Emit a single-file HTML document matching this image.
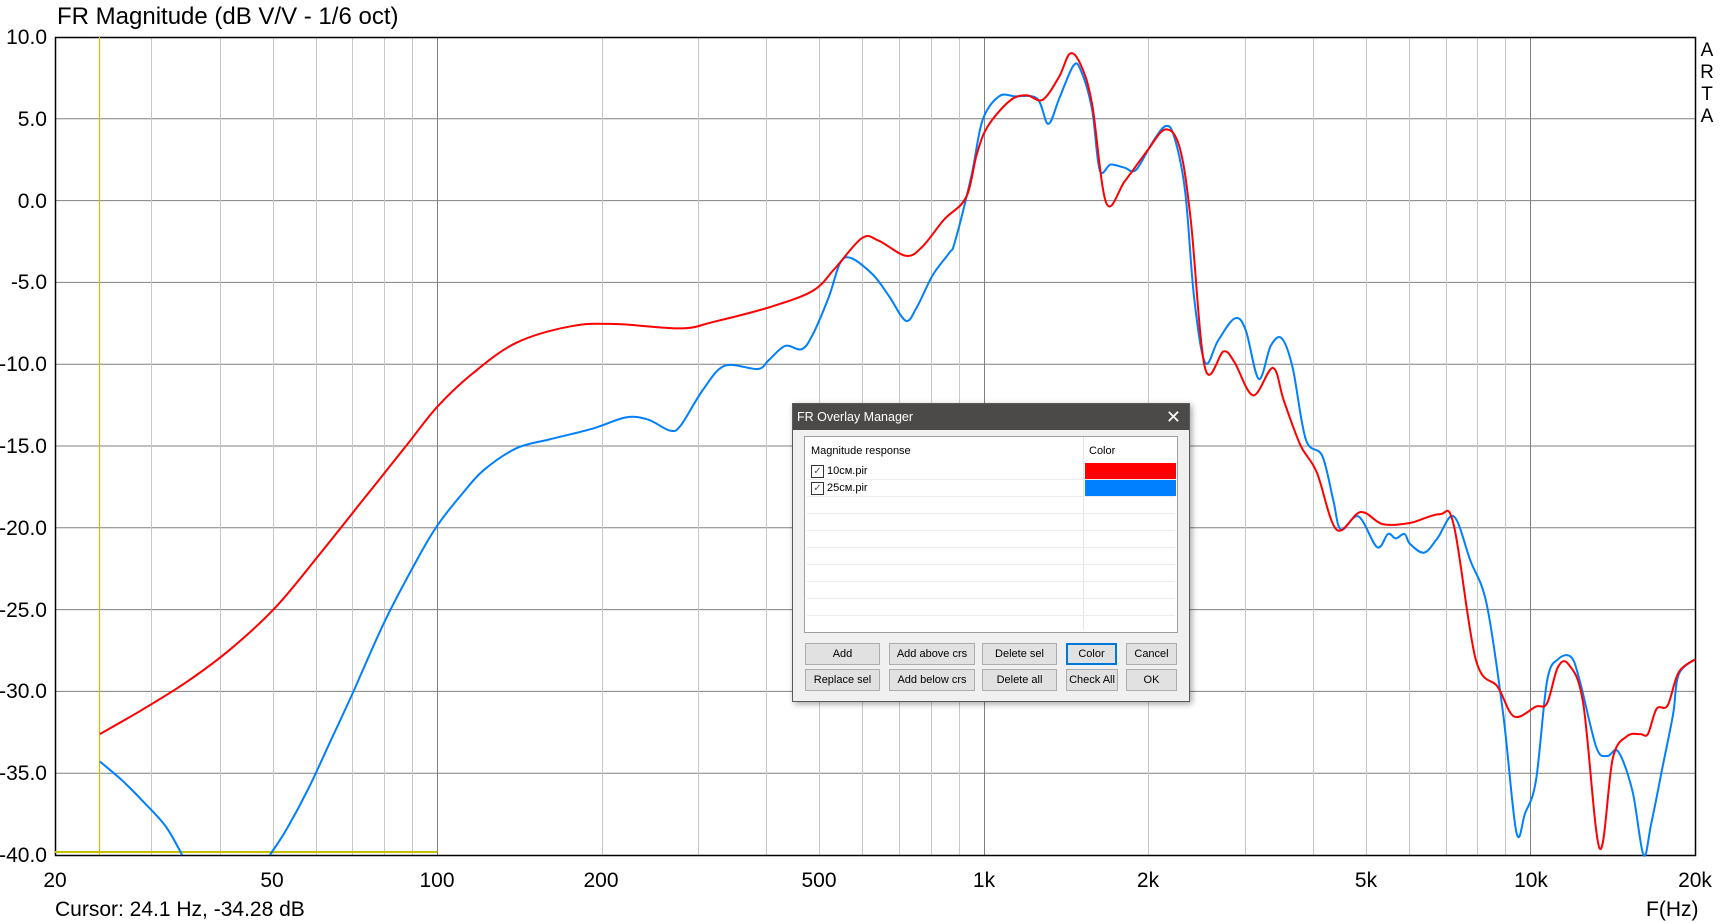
<!DOCTYPE html>
<html><head><meta charset="utf-8">
<style>
body{margin:0;width:1720px;height:923px;background:#fff;overflow:hidden;font-family:"Liberation Sans",Arial,sans-serif;position:relative}
.t{position:absolute;font-size:21px;color:#000;white-space:nowrap;line-height:1}
.yl{position:absolute;right:1673px;font-size:21px;line-height:1}
.xl{position:absolute;top:870px;font-size:21px;line-height:1;transform:translateX(-50%)}
#dlg{position:absolute;left:792px;top:403px;width:396px;height:297px;background:#f0f0f0;border:1px solid #5a5a5a;box-shadow:2px 2px 6px rgba(0,0,0,.35);font-size:11px}
#tb{height:26px;background:#4b4a48;color:#fff;font-size:12.5px;line-height:26px;padding-left:4px;position:relative}
#tb span{position:absolute;right:8px;top:0;font-size:18px}
#lb{position:absolute;left:11px;top:32px;width:372px;height:195px;border:1px solid #a0a0a0;background:#fff}
.row{position:absolute;left:2px;width:368px;height:16px;border-bottom:1px solid #ececec}
.cb{position:absolute;left:4px;top:2px;width:11px;height:11px;border:1px solid #333;font-size:10px;line-height:11px;text-align:center;color:#555}
.btn{position:absolute;background:#e1e1e1;border:1px solid #adadad;text-align:center;line-height:20px;font-size:11px;box-sizing:border-box;height:22px}
</style></head><body>
<div class="t" style="left:57px;top:5px;font-size:24px">FR Magnitude (dB V/V - 1/6 oct)</div>
<svg id="g" width="1720" height="923" style="position:absolute;left:0;top:0"></svg>
<div class="t" style="left:1700px;top:40px;font-size:19px;line-height:22px;width:14px;text-align:center">A<br>R<br>T<br>A</div>
<div id="yl"></div>
<div class="xl" style="left:55px">20</div>
<div class="xl" style="left:272px">50</div>
<div class="xl" style="left:437px">100</div>
<div class="xl" style="left:601px">200</div>
<div class="xl" style="left:819px">500</div>
<div class="xl" style="left:984px">1k</div>
<div class="xl" style="left:1148px">2k</div>
<div class="xl" style="left:1366px">5k</div>
<div class="xl" style="left:1531px">10k</div>
<div class="xl" style="left:1695px">20k</div>
<div class="t" style="left:55px;top:899px;font-size:21px">Cursor: 24.1 Hz, -34.28 dB</div>
<div class="t" style="left:1646px;top:899px;font-size:21px">F(Hz)</div>
<div id="dlg">
<div id="tb">FR Overlay Manager<span>✕</span></div>
<div id="lb">
<div style="position:absolute;left:6px;top:8px">Magnitude response</div>
<div style="position:absolute;left:278px;top:0;width:1px;height:193px;background:#e4e4e4"></div>
<div style="position:absolute;left:284px;top:8px">Color</div>
<div class="row" style="top:26px"><div class="cb">✓</div><span style="position:absolute;left:20px;top:2px">10см.pir</span><div style="position:absolute;left:278px;top:0;width:91px;height:16px;background:#ff0000"></div></div>
<div class="row" style="top:43px"><div class="cb">✓</div><span style="position:absolute;left:20px;top:2px">25см.pir</span><div style="position:absolute;left:278px;top:0;width:91px;height:16px;background:#0080ff"></div></div>
<div class="row" style="top:60px"></div><div class="row" style="top:77px"></div><div class="row" style="top:94px"></div><div class="row" style="top:111px"></div><div class="row" style="top:128px"></div><div class="row" style="top:145px"></div><div class="row" style="top:162px"></div>
</div>
<div class="btn" style="left:12px;top:239px;width:75px">Add</div>
<div class="btn" style="left:96px;top:239px;width:86px">Add above crs</div>
<div class="btn" style="left:189px;top:239px;width:75px">Delete sel</div>
<div class="btn" style="left:273px;top:239px;width:51px;border:2px solid #0078d7;line-height:18px">Color</div>
<div class="btn" style="left:333px;top:239px;width:51px">Cancel</div>
<div class="btn" style="left:12px;top:265px;width:75px">Replace sel</div>
<div class="btn" style="left:96px;top:265px;width:86px">Add below crs</div>
<div class="btn" style="left:189px;top:265px;width:75px">Delete all</div>
<div class="btn" style="left:273px;top:265px;width:52px">Check All</div>
<div class="btn" style="left:333px;top:265px;width:51px">OK</div>
</div>
<script>
var g=document.getElementById('g'),s='';
var L=55,R=1695,T=37,B=855,D=(R-L)/3;
function X(f){return L+D*Math.log10(f/20);}
for(var k=1;k<10;k++){var y=T+k*(B-T)/10;s+='<line x1="'+L+'" x2="'+R+'" y1="'+y+'" y2="'+y+'" stroke="#808080" stroke-width="1"/>';}
[30,40,50,60,70,80,90,100,200,300,400,500,600,700,800,900,1000,2000,3000,4000,5000,6000,7000,8000,9000,10000].forEach(function(f){var x=Math.round(X(f))+0.5;var dec=(f==100||f==1000||f==10000);s+='<line x1="'+x+'" x2="'+x+'" y1="'+T+'" y2="'+B+'" stroke="'+(dec?'#808080':'#c8c8c8')+'" stroke-width="1"/>';});
s+='<rect x="'+L+'.5" y="'+T+'.5" width="'+(R-L)+'" height="'+(B-T)+'" fill="none" stroke="#000" stroke-width="1.5"/>';
s+='<line x1="99.5" x2="99.5" y1="'+T+'" y2="'+B+'" stroke="#c8c000" stroke-width="1.2"/>';
s+='<line x1="'+L+'" x2="437" y1="852" y2="852" stroke="#c8c000" stroke-width="2"/>';
var red=[90,668,130,645,170,620,210,590,250,553,290,505,330,455,370,405,398,370,430,340,470,312,520,297,560,295,620,299,650,293,700,280,740,265,760,245,785,217,800,219,825,233,840,225,860,200,880,180,890,140,900,115,920,92,935,87,950,91,965,70,975,49,985,60,995,95,1008,185,1025,165,1045,138,1062,118,1075,135,1085,200,1098,335,1115,320,1125,330,1142,360,1160,335,1170,365,1185,405,1200,430,1218,482,1240,466,1260,477,1285,476,1312,468,1325,478,1345,600,1365,625,1380,652,1400,643,1410,640,1420,607,1430,605,1443,640,1458,772,1470,690,1483,670,1495,668,1502,668,1510,645,1520,642,1530,612,1545,600];
var blue=[90,693,110,710,130,730,150,752,165,778];
var blue2=[245,778,260,755,280,718,300,675,320,632,350,565,380,508,398,478,420,450,440,428,470,408,500,400,540,390,570,380,590,382,610,392,620,387,640,355,660,333,690,336,700,328,715,315,730,318,740,305,755,270,765,240,775,235,795,250,810,270,825,292,835,280,850,250,865,230,870,220,885,160,895,110,910,88,925,88,945,90,955,113,965,90,978,60,985,65,995,100,1002,155,1012,150,1025,153,1035,155,1050,130,1062,115,1070,125,1080,175,1088,270,1098,330,1110,310,1125,290,1135,300,1147,345,1158,315,1168,308,1178,335,1190,400,1205,415,1215,455,1222,482,1238,470,1255,498,1265,486,1272,490,1280,486,1285,495,1298,503,1310,490,1325,470,1340,510,1355,550,1370,650,1382,757,1390,740,1400,710,1410,620,1420,600,1432,598,1440,620,1455,680,1465,688,1475,684,1488,720,1498,778,1505,750,1515,700,1525,650,1530,614,1545,600];
function P(a){var p=[];for(var i=0;i<a.length;i+=2)p.push([L+(a[i]-49)*(R-L)/1496,T+(a[i+1]-34)*(B-T)/744]);
var d='M'+p[0][0].toFixed(1)+' '+p[0][1].toFixed(1);
for(var i=0;i<p.length-1;i++){var p0=p[i-1]||p[i],p1=p[i],p2=p[i+1],p3=p[i+2]||p2;
d+=' C'+(p1[0]+(p2[0]-p0[0])/6).toFixed(1)+' '+(p1[1]+(p2[1]-p0[1])/6).toFixed(1)+' '+(p2[0]-(p3[0]-p1[0])/6).toFixed(1)+' '+(p2[1]-(p3[1]-p1[1])/6).toFixed(1)+' '+p2[0].toFixed(1)+' '+p2[1].toFixed(1);}
return d;}
s+='<path d="'+P(blue)+'" fill="none" stroke="#0080ff" stroke-width="2"/>';
s+='<path d="'+P(blue2)+'" fill="none" stroke="#0080ff" stroke-width="2"/>';
s+='<path d="'+P(red)+'" fill="none" stroke="#ff0000" stroke-width="2"/>';
g.innerHTML=s;
var yl='';var labs=['10.0','5.0','0.0','-5.0','-10.0','-15.0','-20.0','-25.0','-30.0','-35.0','-40.0'];
for(var k=0;k<11;k++){yl+='<div class="yl" style="top:'+(T+k*(B-T)/10-10)+'px">'+labs[k]+'</div>';}
document.getElementById('yl').innerHTML=yl;
</script>
</body></html>
